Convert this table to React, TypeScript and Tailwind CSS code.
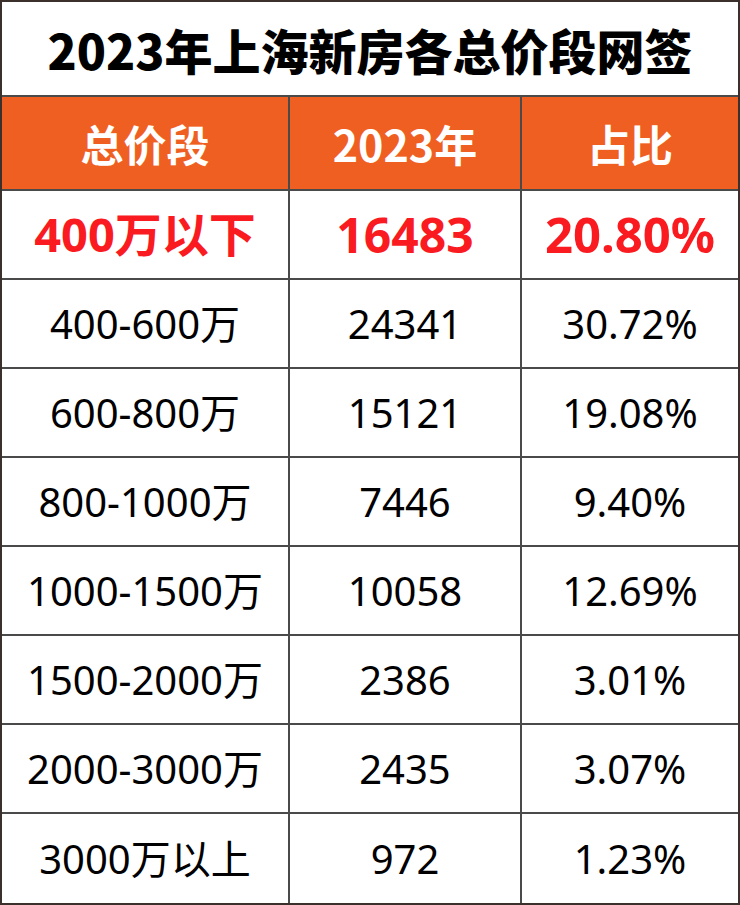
import React from "react";

const rows: [string, string, string][] = [
  ["400-600万", "24341", "30.72%"],
  ["600-800万", "15121", "19.08%"],
  ["800-1000万", "7446", "9.40%"],
  ["1000-1500万", "10058", "12.69%"],
  ["1500-2000万", "2386", "3.01%"],
  ["2000-3000万", "2435", "3.07%"],
  ["3000万以上", "972", "1.23%"],
];

const cjk = "font-['Noto_Sans_CJK_SC',sans-serif]";
const body = "font-['Noto_Sans','Noto_Sans_CJK_SC',sans-serif]";

export default function App() {
  return (
    <div className="w-[740px] h-[905px] bg-white border-2 border-[#3b302b] flex flex-col box-border">
      <div
        className={`h-[95px] shrink-0 flex items-center justify-center border-b-2 border-[#4a4a4a] text-[48px] font-black text-black leading-none ${cjk}`}
      >
        2023年上海新房各总价段网签
      </div>
      <div className="h-[94px] shrink-0 flex bg-[#f05f22] border-b-2 border-[#4a4a4a]">
        <div className={`w-[288px] border-r-2 border-[#4a4a4a] flex items-center justify-center text-white text-[43px] font-bold leading-none ${cjk}`}>
          总价段
        </div>
        <div className={`w-[232px] border-r-2 border-[#4a4a4a] flex items-center justify-center text-white text-[43px] font-bold leading-none ${cjk}`}>
          2023年
        </div>
        <div className={`flex-1 flex items-center justify-center text-white text-[43px] font-bold leading-none ${cjk}`}>
          占比
        </div>
      </div>
      <div className="h-[89px] shrink-0 flex border-b-2 border-[#4a4a4a]">
        <div className={`w-[288px] border-r-2 border-[#4a4a4a] flex items-center justify-center text-[#f91b1f] text-[47px] font-bold leading-none ${body}`}>
          400万以下
        </div>
        <div className={`w-[232px] border-r-2 border-[#4a4a4a] flex items-center justify-center text-[#f91b1f] text-[48px] font-bold leading-none ${body}`}>
          16483
        </div>
        <div className={`flex-1 flex items-center justify-center text-[#f91b1f] text-[49px] font-bold leading-none ${body}`}>
          20.80%
        </div>
      </div>
      {rows.map((r, i) => (
        <div
          key={r[0]}
          className={
            i === rows.length - 1
              ? "flex-1 flex"
              : "h-[89px] shrink-0 flex border-b-2 border-[#4a4a4a]"
          }
        >
          <div className={`w-[288px] border-r-2 border-[#4a4a4a] flex items-center justify-center text-black text-[40px] leading-none ${body}`}>
            {r[0]}
          </div>
          <div className={`w-[232px] border-r-2 border-[#4a4a4a] flex items-center justify-center text-black text-[40px] leading-none ${body}`}>
            {r[1]}
          </div>
          <div className={`flex-1 flex items-center justify-center text-black text-[40px] leading-none ${body}`}>
            {r[2]}
          </div>
        </div>
      ))}
    </div>
  );
}
